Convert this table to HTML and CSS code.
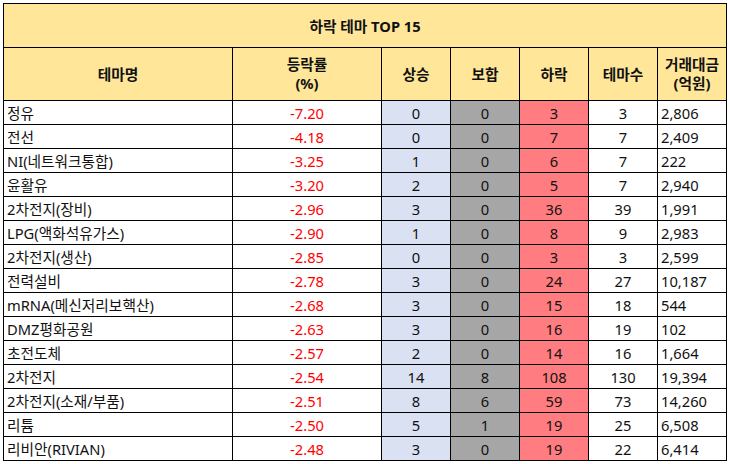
FILE: index.html
```html
<!DOCTYPE html>
<html lang="ko">
<head>
<meta charset="utf-8">
<title>하락 테마 TOP 15</title>
<link rel="stylesheet" href="styles.css">
</head>
<body>
<table class="sheet">
  <colgroup>
    <col class="c-name"><col class="c-pct"><col class="c-n"><col class="c-n"><col class="c-n"><col class="c-n"><col class="c-amt">
  </colgroup>
  <thead>
    <tr class="title-row"><th colspan="7">하락 테마 TOP 15</th></tr>
    <tr class="head-row">
      <th>테마명</th>
      <th>등락률<br>(%)</th>
      <th>상승</th>
      <th>보합</th>
      <th>하락</th>
      <th>테마수</th>
      <th>거래대금<br>(억원)</th>
    </tr>
  </thead>
  <tbody>
    <tr><td class="name">정유</td><td class="pct">-7.20</td><td class="up">0</td><td class="flat">0</td><td class="down">3</td><td class="cnt">3</td><td class="amt">2,806</td></tr>
    <tr><td class="name">전선</td><td class="pct">-4.18</td><td class="up">0</td><td class="flat">0</td><td class="down">7</td><td class="cnt">7</td><td class="amt">2,409</td></tr>
    <tr><td class="name">NI(네트워크통합)</td><td class="pct">-3.25</td><td class="up">1</td><td class="flat">0</td><td class="down">6</td><td class="cnt">7</td><td class="amt">222</td></tr>
    <tr><td class="name">윤활유</td><td class="pct">-3.20</td><td class="up">2</td><td class="flat">0</td><td class="down">5</td><td class="cnt">7</td><td class="amt">2,940</td></tr>
    <tr><td class="name">2차전지(장비)</td><td class="pct">-2.96</td><td class="up">3</td><td class="flat">0</td><td class="down">36</td><td class="cnt">39</td><td class="amt">1,991</td></tr>
    <tr><td class="name">LPG(액화석유가스)</td><td class="pct">-2.90</td><td class="up">1</td><td class="flat">0</td><td class="down">8</td><td class="cnt">9</td><td class="amt">2,983</td></tr>
    <tr><td class="name">2차전지(생산)</td><td class="pct">-2.85</td><td class="up">0</td><td class="flat">0</td><td class="down">3</td><td class="cnt">3</td><td class="amt">2,599</td></tr>
    <tr><td class="name">전력설비</td><td class="pct">-2.78</td><td class="up">3</td><td class="flat">0</td><td class="down">24</td><td class="cnt">27</td><td class="amt">10,187</td></tr>
    <tr><td class="name">mRNA(메신저리보핵산)</td><td class="pct">-2.68</td><td class="up">3</td><td class="flat">0</td><td class="down">15</td><td class="cnt">18</td><td class="amt">544</td></tr>
    <tr><td class="name">DMZ평화공원</td><td class="pct">-2.63</td><td class="up">3</td><td class="flat">0</td><td class="down">16</td><td class="cnt">19</td><td class="amt">102</td></tr>
    <tr><td class="name">초전도체</td><td class="pct">-2.57</td><td class="up">2</td><td class="flat">0</td><td class="down">14</td><td class="cnt">16</td><td class="amt">1,664</td></tr>
    <tr><td class="name">2차전지</td><td class="pct">-2.54</td><td class="up">14</td><td class="flat">8</td><td class="down">108</td><td class="cnt">130</td><td class="amt">19,394</td></tr>
    <tr><td class="name">2차전지(소재/부품)</td><td class="pct">-2.51</td><td class="up">8</td><td class="flat">6</td><td class="down">59</td><td class="cnt">73</td><td class="amt">14,260</td></tr>
    <tr><td class="name">리튬</td><td class="pct">-2.50</td><td class="up">5</td><td class="flat">1</td><td class="down">19</td><td class="cnt">25</td><td class="amt">6,508</td></tr>
    <tr><td class="name">리비안(RIVIAN)</td><td class="pct">-2.48</td><td class="up">3</td><td class="flat">0</td><td class="down">19</td><td class="cnt">22</td><td class="amt">6,414</td></tr>
  </tbody>
</table>
</body>
</html>
```

FILE: styles.css
```css
html, body {
  margin: 0;
  padding: 0;
  background: #ffffff;
}
body {
  padding: 3px;
  font-family: "Noto Sans", "Noto Sans CJK KR", sans-serif;
  font-size: 14.7px;
  color: #111111;
}
.sheet {
  border-collapse: collapse;
  table-layout: fixed;
  width: 724px;
}
.c-name { width: 229px; }
.c-pct { width: 149px; }
.c-n { width: 69px; }
.c-amt { width: 69px; }
.sheet th,
.sheet td {
  border: 1px solid #000000;
  padding: 0 3px;
  white-space: nowrap;
  overflow: hidden;
}
.sheet th {
  background: #ffe699;
  font-weight: bold;
  text-align: center;
}
.title-row th {
  height: 43px;
  padding: 0;
}
.head-row th {
  height: 52px;
  line-height: 19px;
  padding: 0;
}
.sheet td {
  height: 23px;
  line-height: 18px;
  padding-top: 0;
  padding-bottom: 0;
}
.name { text-align: left; }
.pct { text-align: center; color: #ff0000; }
.up { text-align: center; background: #d9e1f2; }
.flat { text-align: center; background: #a6a6a6; }
.down { text-align: center; background: #ff7c80; }
.cnt { text-align: center; }
.amt { text-align: left; }
```
